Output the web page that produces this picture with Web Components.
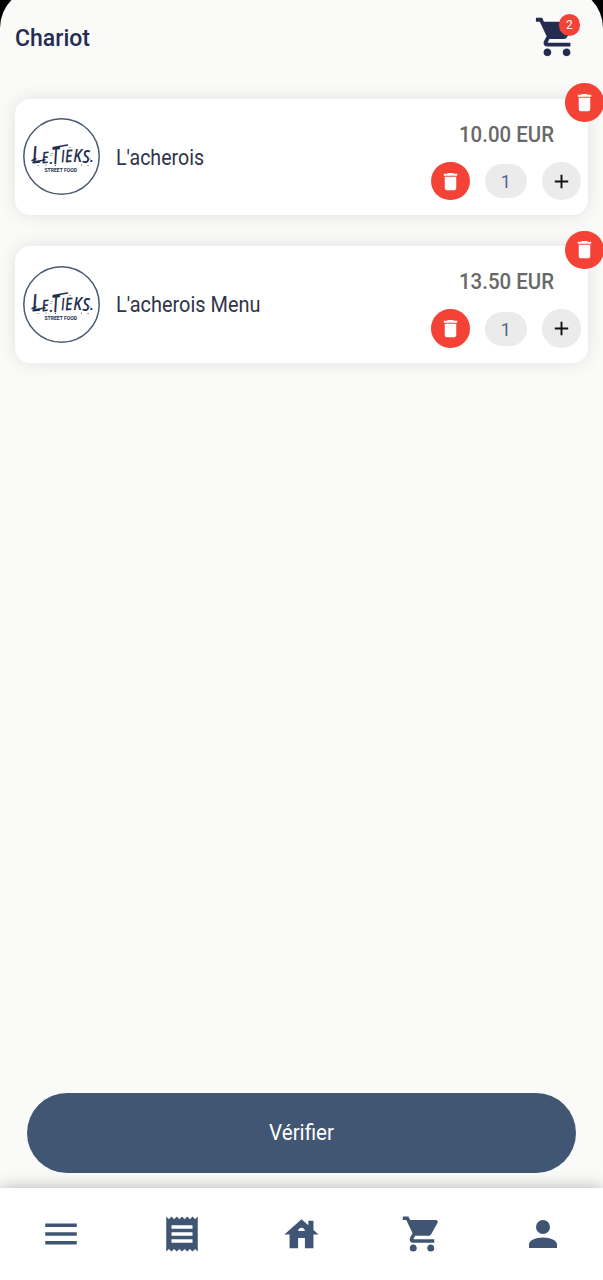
<!DOCTYPE html>
<html lang="fr">
<head>
<meta charset="utf-8">
<title>Chariot</title>
<style>
html,body{margin:0;height:100%;background:#000;overflow:hidden}
body{font-family:Roboto,"Open Sans",sans-serif}
</style>
</head>
<body>
<cart-page></cart-page>
<script>
const ICONS = {
  cart:'M17,18C15.89,18 15,18.89 15,20A2,2 0 0,0 17,22A2,2 0 0,0 19,20C19,18.89 18.1,18 17,18M1,2V4H3L6.6,11.59L5.24,14.04C5.09,14.32 5,14.65 5,15A2,2 0 0,0 7,17H19V15H7.42A.25,.25 0 0,1 7.17,14.75C7.17,14.7 7.18,14.66 7.2,14.63L8.1,13H15.55C16.3,13 16.96,12.58 17.3,11.97L20.88,5.5C20.95,5.34 21,5.17 21,5A1,1 0 0,0 20,4H5.21L4.27,2M7,18C5.89,18 5,18.89 5,20A2,2 0 0,0 7,22A2,2 0 0,0 9,20C9,18.89 8.1,18 7,18Z',
  trash:'M6 19c0 1.1.9 2 2 2h8c1.1 0 2-.9 2-2V7H6v12zM19 4h-3.5l-1-1h-5l-1 1H5v2h14V4z',
  plus:'M19 13h-6v6h-2v-6H5v-2h6V5h2v6h6v2z',
  menu:'M3 18h18v-2H3v2zm0-5h18v-2H3v2zm0-7v2h18V6H3z',
  receipt:'M18 17H6v-2h12v2zm0-4H6v-2h12v2zm0-4H6V7h12v2zM3 22l1.5-1.5L6 22l1.5-1.5L9 22l1.5-1.5L12 22l1.5-1.5L15 22l1.5-1.5L18 22l1.5-1.5L21 22V2l-1.5 1.5L18 2l-1.5 1.5L15 2l-1.5 1.5L12 2l-1.5 1.5L9 2 7.5 3.5 6 2 4.5 3.5 3 2v20z',
  home:'M19 9.3V4h-3v2.6L12 3 2 12h3v8h5v-6h4v6h5v-8h3l-3-2.7zm-9 .7c0-1.1.9-2 2-2s2 .9 2 2h-4z',
  person:'M12,4A4,4 0 0,1 16,8A4,4 0 0,1 12,12A4,4 0 0,1 8,8A4,4 0 0,1 12,4M12,14C16.42,14 20,15.79 20,18V20H4V18C4,15.79 7.58,14 12,14Z'
};
function define(name, html, ready){
  customElements.define(name, class extends HTMLElement{
    connectedCallback(){
      if(this.shadowRoot) return;
      const root = this.attachShadow({mode:'open'});
      root.innerHTML = typeof html === 'function' ? html(this) : html;
      if(ready) ready(this, root);
    }
  });
}
define('app-icon', el => `<style>:host{display:block;flex:none}svg{display:block}</style>
<svg width="${el.getAttribute('size')}" height="${el.getAttribute('size')}" viewBox="0 0 24 24" fill="currentColor"><path d="${ICONS[el.getAttribute('name')]}"/></svg>`);

// A single line of text condensed or widened to an exact width.
define('fit-text', el => `<style>:host{display:block;flex:none;width:${el.getAttribute('width')}px;white-space:nowrap}
span{display:inline-block;transform-origin:0 50%}</style><span>${el.getAttribute('text')}</span>`,
(el, root) => {
  const s = root.querySelector('span');
  s.style.transform = `scaleX(${el.getAttribute('width') / s.getBoundingClientRect().width})`;
});

define('round-button', el => `<style>
:host{display:grid;place-items:center;flex:none;box-sizing:border-box;width:38.5px;height:38.5px;border-radius:50%;background:#f44336;color:#fff}
:host([tone=plain]){background:#ebebeb;color:#111}</style>
<app-icon name="${el.getAttribute('icon')}" size="23"></app-icon>`);

define('brand-logo', `<style>:host{display:block;flex:none;width:77px;height:77px}svg{display:block}
text{font-family:"Open Sans",sans-serif;fill:#23304d}</style>
<svg width="77" height="77" viewBox="0 0 77 77">
<circle cx="38.5" cy="38.5" r="37.7" fill="#fff" stroke="#4a5a70" stroke-width="1.5"/>
<g font-style="italic" font-weight="600">
<text font-size="24" transform="translate(9.5 45.5) rotate(-5) scale(.75 1)">L</text>
<text font-size="16" transform="translate(19 45.5) rotate(-5) scale(.85 1)">E</text>
<text font-size="15" transform="translate(26.5 45.5)">.</text>
<text font-size="24" transform="translate(29 46.5) rotate(-4) scale(.65 1)">T</text>
<text font-size="17.5" transform="translate(38.3 44.5) rotate(-4) scale(.75 1)">I</text>
<text font-size="17.5" transform="translate(42.3 44.5) rotate(-4) scale(.82 1)">E</text>
<text font-size="17.5" transform="translate(50.3 44) scale(.85 1)">K</text>
<text font-size="18.5" transform="translate(59.3 44.8) scale(.8 1)">S</text>
<text font-size="14" transform="translate(67 44)">.</text>
</g>
<text x="21.5" y="53.5" font-size="6" font-weight="700" textLength="32.5" lengthAdjust="spacingAndGlyphs" style="font-family:Roboto,sans-serif">STREET FOOD</text>
<g stroke="#23304d" fill="none" stroke-linecap="round">
<path d="M9 42.5l4-1.8M10 44.5l12-2.7M30.5 29.5l14-2.5" stroke-width="1.5"/>
<path d="M29 35.5v.1M28 37.6v.1M32.5 47.5v.1M58.5 47v.1M65 47.5v.1M47 29.5v.1M15 47.5v.1M67 41v.1M23 47v.1" stroke-width=".9"/>
</g></svg>`);

define('cart-item', el => `<style>
:host{display:flex;position:relative;box-sizing:border-box;height:116.5px;padding:0 7.5px 0 8px;align-items:center;border-radius:15px;background:#fff;box-shadow:0 0 18px rgba(0,0,0,.1)}
.name{margin-left:15.5px;color:#30344a;font-size:21.5px;line-height:26px;margin-top:2px}
.side{margin-left:auto;display:flex;flex-direction:column;align-items:flex-end;padding-top:8.5px}
.price{margin-right:27px;color:#686868;font-size:21.5px;font-weight:500;line-height:26px;margin-bottom:14px}
.row{display:flex;align-items:center;gap:15.5px}
.qty{display:grid;place-items:center;width:41.5px;height:34px;border-radius:17px;background:#ebebeb;color:#53658a;font-size:18px;padding-top:1px;box-sizing:border-box}
.remove{position:absolute;right:-15.5px;top:-15.5px}
</style>
<brand-logo></brand-logo>
<fit-text class="name" text="${el.getAttribute('name')}" width="${el.getAttribute('w')}"></fit-text>
<div class="side"><fit-text class="price" width="95" text="${el.getAttribute('price')}"></fit-text>
<div class="row"><round-button icon="trash"></round-button><div class="qty">1</div><round-button tone="plain" icon="plus"></round-button></div></div>
<round-button class="remove" icon="trash"></round-button>`);

define('page-header', `<style>
:host{display:flex;box-sizing:border-box;height:98.5px;padding:14px 23px 0 14.5px;justify-content:space-between;align-items:flex-start;color:#242d51}
.title{font-size:24.6px;font-weight:500;line-height:30px;margin-top:9px}
.cart{position:relative;width:46px}
.badge{position:absolute;left:24.5px;top:.2px;width:21.5px;height:21.5px;border-radius:50%;background:#f44336;color:#fff;display:grid;place-items:center;font-size:12px}
</style>
<fit-text class="title" text="Chariot" width="75"></fit-text>
<div class="cart"><app-icon name="cart" size="46"></app-icon><span class="badge">2</span></div>`);

define('nav-bar', `<style>
:host{display:grid;grid-template-columns:repeat(5,1fr);place-items:center;height:92px;background:#fff;color:#3f5573;box-shadow:0 0 16px rgba(0,0,0,.28);flex:none;padding-left:1px}
</style>
<app-icon name="menu" size="42"></app-icon><app-icon name="receipt" size="42"></app-icon><app-icon name="home" size="41"></app-icon><app-icon name="cart" size="42"></app-icon><app-icon name="person" size="42"></app-icon>`);

define('cart-page', `<style>
:host{display:flex;flex-direction:column;box-sizing:border-box;width:603px;height:1292px;margin-top:-12px;padding-top:12px;border-radius:40px 40px 0 0;background:#fafaf8;overflow:hidden}
.list{display:flex;flex-direction:column;gap:31px;margin:0 15px 0 15px}
.check{display:grid;place-items:center;flex:none;height:80px;margin:auto 27px 15.5px 27px;border-radius:40px;background:#405673;color:#fff;font-size:21.3px;font-weight:400}
</style>
<page-header></page-header>
<div class="list">
<cart-item name="L'acherois" w="88" price="10.00 EUR"></cart-item>
<cart-item name="L'acherois Menu" w="144.5" price="13.50 EUR"></cart-item>
</div>
<div class="check"><fit-text text="Vérifier" width="65"></fit-text></div>
<nav-bar></nav-bar>`);
</script>
</body>
</html>
